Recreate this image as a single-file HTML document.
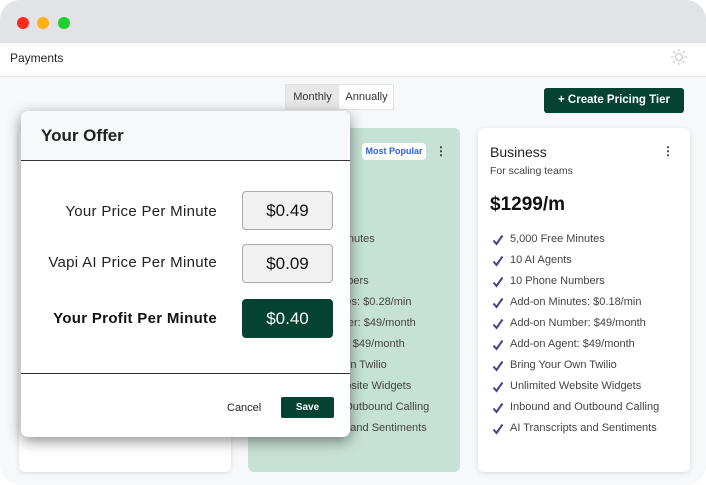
<!DOCTYPE html>
<html><head><style>
*{margin:0;padding:0;box-sizing:border-box}
body{width:706px;height:485px;background:#fff;font-family:"Liberation Sans",sans-serif;position:relative;overflow:hidden}
.win{position:absolute;left:0;top:0;width:706px;height:485px;border-radius:20px;overflow:hidden;background:#f7f8f9}
.bar{position:absolute;left:0;top:0;width:706px;height:43px;background:#e1e3e6}
.dot{position:absolute;top:17px;width:12px;height:12px;border-radius:50%}
.hdr{position:absolute;left:0;top:43px;width:706px;height:34px;background:#fff;border-bottom:1px solid #e6e6e6}
.abs{position:absolute}
.card{position:absolute;top:128px;width:212px;height:344px;border-radius:6px;background:#fff;box-shadow:0 1px 5px rgba(0,0,0,.12)}
.feat{position:absolute;font-size:11px;color:#444;white-space:nowrap}
.chk{position:absolute;width:12px;height:12px}
.modal{position:absolute;left:21px;top:111px;width:329px;height:326px;background:#fff;border-radius:7px;box-shadow:0 4px 14px rgba(0,0,0,.45);overflow:hidden}
.lbl{position:absolute;right:133px;font-size:15px;color:#222;white-space:nowrap;letter-spacing:0.3px}
.box{position:absolute;left:221px;width:91px;height:39px;border:1px solid #aaa;border-radius:4px;background:#f1f1f1;font-size:17px;text-align:center;line-height:37px;color:#111}
</style></head><body>
<div class="win">
<div class="bar"></div>
<div class="dot" style="left:17px;background:#ff2a1e"></div>
<div class="dot" style="left:37px;background:#ffb20f"></div>
<div class="dot" style="left:58px;background:#1bd22a"></div>
<div class="hdr"><div class="abs" style="left:10px;top:8px;font-size:12px;color:#222">Payments</div>
<svg class="abs" style="left:670px;top:5px" width="18" height="18" viewBox="0 0 18 18"><circle cx="9" cy="9" r="3.5" fill="none" stroke="#ccc" stroke-width="1.3"/><g stroke="#ccc" stroke-width="1.3"><path d="M9 1v2.5M9 14.5V17M1 9h2.5M14.5 9H17M3.3 3.3l1.8 1.8M12.9 12.9l1.8 1.8M3.3 14.7l1.8-1.8M12.9 5.1l1.8-1.8"/></g></svg></div>
<div class="abs" style="left:285px;top:84px;width:109px;height:26px;border:1px solid #e2e2e2;background:#fff;font-size:11px;color:#333">
<div class="abs" style="left:0;top:0;width:53px;height:24px;background:#e8e8e8;line-height:24px;text-align:center">Monthly</div>
<div class="abs" style="left:53px;top:0;width:55px;height:24px;line-height:24px;text-align:center">Annually</div></div>
<div class="abs" style="left:544px;top:88px;width:140px;height:25px;background:#044232;border-radius:3px;color:#fff;font-size:11.5px;font-weight:bold;line-height:25px;text-align:center">+ Create Pricing Tier</div>

<div class="card" style="left:19px"></div>
<div class="card" style="left:248px;background:#c6e1d5;box-shadow:none">
<div class="abs" style="left:114px;top:15px;width:64px;height:17px;background:#fff;border-radius:4px;color:#2f5ee0;font-size:9px;font-weight:bold;line-height:17px;text-align:center">Most Popular</div>
<div class="abs" style="left:187px;top:16px;font-size:12px;font-weight:bold;color:#333">⋮</div>
</div>
<div class="card" style="left:478px">
<div class="abs" style="left:12px;top:16px;font-size:14px;color:#222">Business</div>
<div class="abs" style="left:184px;top:16px;font-size:12px;font-weight:bold;color:#333">⋮</div>
<div class="abs" style="left:12px;top:37px;font-size:10.5px;color:#444">For scaling teams</div>
<div class="abs" style="left:12px;top:66px;font-size:19px;font-weight:bold;color:#111">$1299/m</div>
</div>
<div id="f"></div>

<div class="modal">
<div class="abs" style="left:0;top:0;width:329px;height:50px;background:#f7f8fa;border-bottom:1px solid #333"></div>
<div class="abs" style="left:20px;top:15px;font-size:17px;font-weight:bold;color:#222">Your Offer</div>
<div class="lbl" style="top:92px">Your Price Per Minute</div>
<div class="lbl" style="top:143px">Vapi AI Price Per Minute</div>
<div class="lbl" style="top:199px;font-weight:bold;color:#111">Your Profit Per Minute</div>
<div class="box" style="top:80px">$0.49</div>
<div class="box" style="top:133px">$0.09</div>
<div class="box" style="top:188px;background:#044232;border-color:#044232;color:#fff">$0.40</div>
<div class="abs" style="left:0;top:262px;width:329px;height:1px;background:#333"></div>
<div class="abs" style="left:206px;top:291px;font-size:11px;color:#222">Cancel</div>
<div class="abs" style="left:260px;top:286px;width:53px;height:21px;background:#044232;border-radius:2px;color:#fff;font-size:10px;font-weight:bold;line-height:21px;text-align:center">Save</div>
</div>
</div>
<script>
var t=["5,000 Free Minutes","10 AI Agents","10 Phone Numbers","Add-on Minutes: $0.18/min","Add-on Number: $49/month","Add-on Agent: $49/month","Bring Your Own Twilio","Unlimited Website Widgets","Inbound and Outbound Calling","AI Transcripts and Sentiments"];
var m=["5,000 Free Minutes","5 AI Agents","5 Phone Numbers","Add-on Minutes: $0.28/min","Add-on Number: $49/month","Add-on Agent: $49/month","Bring Your Own Twilio","Unlimited Website Widgets","Inbound and Outbound Calling","AI Transcripts and Sentiments"];
var h="";
for(var i=0;i<10;i++){var y=232+i*21;
h+='<svg class="chk" style="left:492px;top:'+(y+2)+'px" viewBox="0 0 12 12"><path d="M1.5 6.5 L4.5 10 L10.5 1.5" fill="none" stroke="#4a3f8c" stroke-width="2"/></svg>';
h+='<div class="feat" style="left:510px;top:'+(y+1)+'px">'+t[i]+'</div>';
h+='<div class="feat" style="left:280px;top:'+(y+1)+'px">'+m[i]+'</div>';}
document.getElementById("f").innerHTML=h;
</script>
</body></html>
